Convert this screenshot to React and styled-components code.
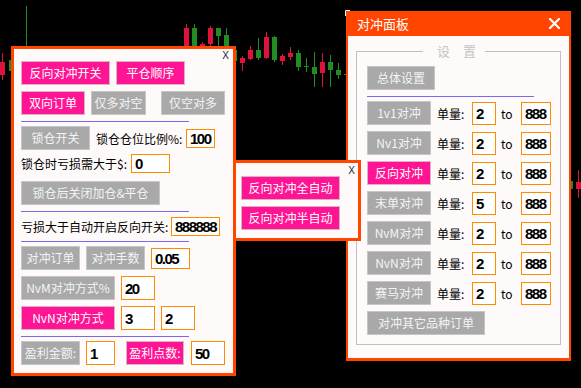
import React from 'react';
import styled, { createGlobalStyle } from 'styled-components';

const ORANGE_RED = '#FF4500';
const DEEP_PINK = '#FF1493';
const DARK_GRAY = '#A9A9A9';
const SNOW = '#FFFAFA';
const SLATE = '#7B68EE';
const FIELD_BORDER = '#FF8C00';
const UP = '#228B22';
const DOWN = '#DC143C';

const CJK = `"Noto Sans CJK SC", "Noto Sans", sans-serif`;

// x = body left, body top/bottom, wick top/bottom
const candles = [
  { x: 0, o: 62, c: 75, h: 53, l: 80, up: false },
  { x: 9, o: 60, c: 71, h: 56, l: 75, up: true },
  { x: 24, o: 50, c: 62, h: 6, l: 66, up: true },
  { x: 184, o: 28, c: 50, h: 24, l: 52, up: false },
  { x: 192, o: 28, c: 50, h: 24, l: 52, up: true },
  { x: 200, o: 44, c: 48, h: 42, l: 50, up: false },
  { x: 208, o: 28, c: 44, h: 26, l: 47, up: false },
  { x: 216, o: 28, c: 36, h: 28, l: 47, up: true },
  { x: 224, o: 35, c: 50, h: 28, l: 52, up: true },
  { x: 232, o: 50, c: 61, h: 46, l: 63, up: true },
  { x: 240, o: 58, c: 63, h: 56, l: 71, up: false },
  { x: 248, o: 50, c: 59, h: 46, l: 60, up: false },
  { x: 256, o: 50, c: 58, h: 38, l: 60, up: true },
  { x: 264, o: 37, c: 58, h: 32, l: 59, up: false },
  { x: 272, o: 37, c: 60, h: 36, l: 62, up: true },
  { x: 280, o: 56, c: 61, h: 54, l: 65, up: false },
  { x: 288, o: 53, c: 57, h: 47, l: 60, up: false },
  { x: 296, o: 53, c: 67, h: 50, l: 71, up: true },
  { x: 304, o: 66, c: 67, h: 58, l: 72, up: true },
  { x: 312, o: 67, c: 74, h: 52, l: 87, up: true },
  { x: 320, o: 62, c: 73, h: 53, l: 87, up: false },
  { x: 328, o: 62, c: 70, h: 55, l: 87, up: true },
  { x: 336, o: 70, c: 75, h: 63, l: 79, up: true },
  { x: 344, o: 74, c: 75, h: 70, l: 79, up: true },
  { x: 568, o: 181, c: 189, h: 178, l: 192, up: true },
  { x: 576, o: 182, c: 189, h: 170, l: 198, up: false },
];

const GlobalStyle = createGlobalStyle`
  html, body {
    margin: 0;
    padding: 0;
    background: #000;
  }
  * {
    box-sizing: border-box;
  }
`;

const Stage = styled.div`
  position: relative;
  width: 581px;
  height: 388px;
  background: #000;
  overflow: hidden;
  font-family: ${ CJK };
`;

const Chart = styled.svg`
  position: absolute;
  inset: 0;
`;

const Window = styled.div`
  position: absolute;
  left: ${ ({ $left }) => $left }px;
  top: ${ ({ $top }) => $top }px;
  width: ${ ({ $width }) => $width }px;
  height: ${ ({ $height }) => $height }px;
  z-index: ${ ({ $z }) => $z };
  background: ${ SNOW };
  border: 3px solid ${ ORANGE_RED };
  display: flex;
  flex-direction: column;
`;

const MainWindow = styled(Window)`
  border-width: 0 2px 3px 2px;
`;

const TitleBar = styled.div`
  height: 25px;
  flex: none;
  margin: 0 -2px;
  padding: 0 11px;
  background: ${ ORANGE_RED };
  display: flex;
  align-items: center;
  justify-content: space-between;
  color: #fff;
  font-size: 13px;
`;

const Inner = styled.div`
  position: relative;
  flex: 1;
  display: flex;
  flex-direction: column;
  padding: ${ ({ $pad }) => $pad };
`;

const CloseMark = styled.span`
  position: absolute;
  top: ${ ({ $top = 0 }) => $top }px;
  right: ${ ({ $right = 3 }) => $right }px;
  font-family: "Liberation Sans", Arial, sans-serif;
  font-size: 10px;
  line-height: 10px;
  color: #1b1b2f;
`;

const Group = styled.fieldset`
  margin: 7px 8px 0 8px;
  padding: 7px 10px 9px 10px;
  border: 1px solid #c0c0c0;
  min-width: 0;
  display: flex;
  flex-direction: column;
`;

const Legend = styled.legend`
  margin-left: 56px;
  padding: 0 9px 0 14px;
  font-size: 13px;
  line-height: 16px;
  color: #c4c4c4;
`;

const Row = styled.div`
  display: flex;
  align-items: center;
  margin-top: ${ ({ $mt = 0 }) => $mt }px;
`;

const Button = styled.div`
  flex: none;
  width: ${ ({ $w }) => $w }px;
  height: 24px;
  margin-left: ${ ({ $ml = 0 }) => $ml }px;
  background: ${ ({ $pink }) => ($pink ? DEEP_PINK : DARK_GRAY) };
  border: 1px solid ${ ({ $pink }) => ($pink ? '#d9b4c8' : '#c6c6c6') };
  color: ${ ({ $pink }) => ($pink ? '#ffffff' : '#f4f4f4') };
  font-size: 12px;
  line-height: 22px;
  text-align: center;
  white-space: nowrap;
`;

const Label = styled.span`
  flex: none;
  width: ${ ({ $w }) => $w }px;
  margin-left: ${ ({ $ml = 0 }) => $ml }px;
  padding-left: ${ ({ $pl = 0 }) => $pl }px;
  font-size: 12px;
  color: #000;
  white-space: nowrap;
`;

const Field = styled.input`
  flex: none;
  width: ${ ({ $w }) => $w }px;
  height: ${ ({ $h = 24 }) => $h }px;
  margin: 0 0 0 ${ ({ $ml = 0 }) => $ml }px;
  padding: 0 0 0 3px;
  border: 1px solid ${ FIELD_BORDER };
  background: #fff;
  font-family: "Liberation Sans", Arial, sans-serif;
  font-weight: bold;
  font-size: 15px;
  letter-spacing: -1.5px;
  color: #000;
  outline: none;
`;

const Rule = styled.div`
  width: ${ ({ $w }) => $w }px;
  height: 1px;
  margin-top: ${ ({ $mt }) => $mt }px;
  background: ${ SLATE };
`;

function CandleChart() {
  return (
    <Chart width="581" height="388" viewBox="0 0 581 388">
      { candles.map((k) => {
        const color = k.up ? UP : DOWN;
        return (
          <g key={ k.x }>
            <rect x={ k.x + 2 } y={ k.h } width="1" height={ k.l - k.h } fill={ color }/>
            <rect x={ k.x } y={ k.o } width="5" height={ Math.max(1, k.c - k.o) } fill={ color }/>
          </g>
        );
      }) }
      <path d="M345.5 16 V10.5 H350" stroke="#fff" strokeWidth="1" fill="none"/>
    </Chart>
  );
}

function CloseIcon() {
  return (
    <svg width="11" height="11" viewBox="0 0 11 11">
      <path d="M1 1 L10 10 M10 1 L1 10" stroke="#fff" strokeWidth="2.2" strokeLinecap="square"/>
    </svg>
  );
}

function LeftPanel() {
  return (
    <Window $left={ 11 } $top={ 46 } $width={ 225 } $height={ 330 } $z={ 1 }>
      <Inner $pad="12px 0 0 7px">
        <CloseMark $top={ 2 } $right={ 4 }>X</CloseMark>
        <Row>
          <Button $pink $w={ 89 }>反向对冲开关</Button>
          <Button $pink $w={ 69 } $ml={ 6 }>平仓顺序</Button>
        </Row>
        <Row $mt={ 6 }>
          <Button $pink $w={ 64 }>双向订单</Button>
          <Button $w={ 55 } $ml={ 6 }>仅多对空</Button>
          <Button $w={ 64 } $ml={ 15 }>仅空对多</Button>
        </Row>
        <Rule $w={ 168 } $mt={ 6 }/>
        <Row $mt={ 4 }>
          <Button $w={ 69 }>锁仓开关</Button>
          <Label $w={ 90 } $ml={ 6 }>锁仓仓位比例%:</Label>
          <Field $w={ 29 } $h={ 19 } readOnly value="100"/>
        </Row>
        <Row $mt={ 4 }>
          <Label $w={ 110 }>锁仓时亏损需大于$:</Label>
          <Field $w={ 39 } $h={ 19 } readOnly value="0"/>
        </Row>
        <Row $mt={ 8 }>
          <Button $w={ 139 }>锁仓后关闭加仓&amp;平仓</Button>
        </Row>
        <Rule $w={ 168 } $mt={ 6 }/>
        <Row $mt={ 5 }>
          <Label $w={ 150 }>亏损大于自动开启反向开关:</Label>
          <Field $w={ 49 } $h={ 19 } readOnly value="888888"/>
        </Row>
        <Rule $w={ 168 } $mt={ 5 }/>
        <Row $mt={ 4 }>
          <Button $w={ 59 }>对冲订单</Button>
          <Button $w={ 59 } $ml={ 6 }>对冲手数</Button>
          <Field $w={ 39 } $h={ 21 } $ml={ 6 } readOnly value="0.05"/>
        </Row>
        <Row $mt={ 6 }>
          <Button $w={ 94 }>NvM对冲方式%</Button>
          <Field $w={ 34 } $ml={ 6 } readOnly value="20"/>
        </Row>
        <Row $mt={ 6 }>
          <Button $pink $w={ 94 }>NvN对冲方式</Button>
          <Field $w={ 34 } $ml={ 6 } readOnly value="3"/>
          <Field $w={ 34 } $ml={ 6 } readOnly value="2"/>
        </Row>
        <Rule $w={ 168 } $mt={ 6 }/>
        <Row $mt={ 4 }>
          <Button $w={ 59 }>盈利金额:</Button>
          <Field $w={ 29 } $ml={ 6 } readOnly value="1"/>
          <Button $pink $w={ 58 } $ml={ 11 }>盈利点数:</Button>
          <Field $w={ 34 } $ml={ 7 } readOnly value="50"/>
        </Row>
      </Inner>
    </Window>
  );
}

function AutoPanel() {
  return (
    <Window $left={ 233 } $top={ 160 } $width={ 128 } $height={ 81 } $z={ 3 }>
      <Inner $pad="13px 0 0 5px">
        <CloseMark $top={ 3 }>X</CloseMark>
        <Button $pink $w={ 99 }>反向对冲全自动</Button>
        <Row $mt={ 6 }>
          <Button $pink $w={ 99 }>反向对冲半自动</Button>
        </Row>
      </Inner>
    </Window>
  );
}

const hedgeRows = [
  { name: '1v1对冲', from: '2' },
  { name: 'Nv1对冲', from: '2' },
  { name: '反向对冲', from: '2', pink: true },
  { name: '末单对冲', from: '5' },
  { name: 'NvM对冲', from: '2' },
  { name: 'NvN对冲', from: '2' },
  { name: '赛马对冲', from: '2' },
];

function HedgePanel() {
  return (
    <MainWindow $left={ 346 } $top={ 11 } $width={ 225 } $height={ 350 } $z={ 2 }>
      <TitleBar>
        <span>对冲面板</span>
        <CloseIcon/>
      </TitleBar>
      <Group>
        <Legend>设　置</Legend>
        <Row>
          <Button $w={ 68 }>总体设置</Button>
        </Row>
        <Rule $w={ 167 } $mt={ 6 }/>
        { hedgeRows.map((r, i) => (
          <Row key={ r.name } $mt={ i === 0 ? 4 : 6 }>
            <Button $pink={ r.pink } $w={ 64 }>{ r.name }</Button>
            <Label $w={ 35 } $ml={ 6 }>单量:</Label>
            <Field $w={ 24 } $h={ 23 } readOnly value={ r.from }/>
            <Label $w={ 25 } $pl={ 5 }>to</Label>
            <Field $w={ 30 } $h={ 23 } readOnly value="888"/>
          </Row>
        )) }
        <Row $mt={ 6 }>
          <Button $w={ 118 }>对冲其它品种订单</Button>
        </Row>
      </Group>
    </MainWindow>
  );
}

export default function App() {
  return (
    <Stage>
      <GlobalStyle/>
      <CandleChart/>
      <LeftPanel/>
      <HedgePanel/>
      <AutoPanel/>
    </Stage>
  );
}
